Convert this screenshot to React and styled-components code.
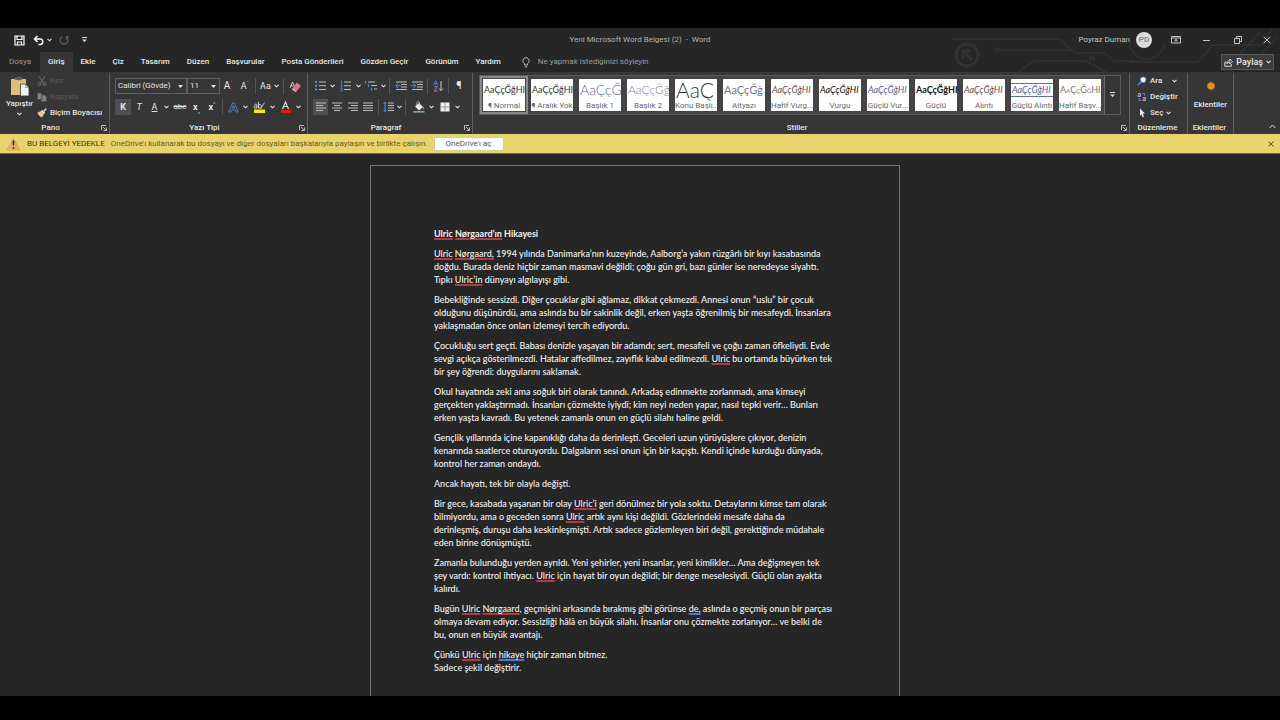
import { useState } from "react"

import styled, { createGlobalStyle } from "styled-components";
import { css } from "styled-components"


const GlobalStyle = createGlobalStyle`
    * { box-sizing:border-box; }
    body {
        margin:0;
        background-color:#000;
        font-family:Roboto, "Noto Sans", sans-serif;
        font-size:8px;
        line-height:12px;
        color:#e6e6e6;
    }
    button, input, select {
        font:inherit;
        color:inherit;
        background:none;
        border:none;
        padding:0;
        margin:0;
    }
    svg { display:block; flex:none; }
`
const Screen = styled.div`
    min-height:100vh;
    padding:28px 0 24px;
    display:flex;
    flex-direction:column;
`
const Window = styled.div`
    flex:1;
    display:flex;
    flex-direction:column;
    background-color:#262626;
`
const Header = styled.header`
    position:relative;
`
const Circuit = styled.svg`
    position:absolute;
    top:0;
    right:0;
`
const TitleBar = styled.div`
    position:relative;
    display:grid;
    grid-template-columns:1fr auto 1fr;
    align-items:center;
    height:24px;
`
const QuickAccess = styled.div`
    display:flex;
    align-items:center;
    padding-left:8px;
`
const DocTitle = styled.h1`
    margin:0;
    font-size:8px;
    font-weight:400;
    color:#b4b4b4;
    white-space:pre;
`
const WindowTools = styled.div`
    display:flex;
    justify-content:flex-end;
    align-items:center;
    color:#c4c4c4;
`
const Avatar = styled.span`
    width:16px;
    height:16px;
    margin:0 8px 0 6px;
    border-radius:50%;
    background-color:#dcdcdc;
    color:#666;
    line-height:16px;
    text-align:center;
`
const ToolButton = styled.button`
    display:flex;
    align-items:center;
    justify-content:center;
    flex:none;
    width:${p => p.$w || 16}px;
    height:16px;
    ${p => p.$active && css`background-color:#505050;`}
    ${p => p.$dim && css`color:#5c5c5c;`}
`
const TabRow = styled.nav`
    position:relative;
    display:flex;
    align-items:stretch;
    height:20px;
    padding-right:6px;
`
const Tab = styled.button`
    padding:0 9px 0 8px;
    font-weight:500;
    white-space:nowrap;
    ${p => p.$file && css`color:#9a9a9a; font-weight:400; padding:0 9px;`}
    ${p => p.$active && css`background-color:#363636; padding:0 8px;`}
`
const Search = styled.label`
    display:flex;
    flex:1;
    align-items:center;
    gap:8px;
    margin-left:12px;
    color:#b8b8b8;
`
const SearchInput = styled.input`
    width:160px;
    outline:none;
    &::placeholder { color:#9c9c9c; opacity:1; }
`
const ShareButton = styled.button`
    display:flex;
    align-items:center;
    gap:3px;
    align-self:center;
    height:16px;
    padding:0 2px;
    border:1px solid #5a5a5a;
    background-color:#3c3c3c;
    font-size:9px;
    font-weight:500;
`
const Ribbon = styled.div`
    display:flex;
    height:62px;
    padding-top:1px;
    background-color:#363636;
`
const Group = styled.section`
    display:flex;
    flex-direction:column;
    justify-content:space-between;
    flex:${p => p.$grow ? "1" : "none"};
    min-width:0;
    width:${p => p.$w ? `${p.$w}px` : "auto"};
    border-right:1px solid #5e5e5e;
`
const GroupBody = styled.div`
    display:flex;
    flex-direction:column;
    gap:5px;
    padding:5px 0 0 5px;
`
const GroupFooter = styled.div`
    display:flex;
    align-items:center;
    height:12px;
    padding-right:2px;
    font-weight:500;
`
const GroupName = styled.span`
    flex:1;
    text-align:center;
`
const Row = styled.div`
    display:flex;
    align-items:center;
    height:16px;
`
const Divider = styled.span`
    flex:none;
    width:1px;
    height:16px;
    margin:0 ${p => p.$m || 3}px 0 2px;
    background-color:#555;
`
const SelectBox = styled.label`
    display:flex;
    align-items:center;
    width:${p => p.$w}px;
    height:16px;
    padding:0 3px 0 2px;
    border:1px solid #5e5e5e;
`
const Select = styled.select`
    flex:1;
    min-width:0;
    appearance:none;
    outline:none;
`
const Glyph = styled.span`
    font-size:${p => p.$size || 10}px;
    font-weight:${p => p.$bold ? 700 : 400};
    font-style:${p => p.$italic ? "italic" : "normal"};
    text-decoration:${p => p.$line || "none"};
    sup, sub { font-size:6px; line-height:0; color:#6f9fd8; }
`
const Clipboard = styled.div`
    display:flex;
    padding-top:1px;
`
const PasteButton = styled.button`
    display:flex;
    flex-direction:column;
    align-items:center;
    width:37px;
    padding:2px 0 0 2px;
    font-weight:500;
    svg + span { margin:2px 0; }
`
const Stack = styled.div`
    display:flex;
    flex-direction:column;
    gap:4px;
    padding-top:1px;
`
const EditStack = styled(Stack)`
    padding:2px 0 0 7px;
`
const TextButton = styled.button`
    display:flex;
    align-items:center;
    gap:3px;
    height:12px;
    white-space:nowrap;
    font-weight:500;
    ${p => p.$dim && css`color:#585858; font-weight:400;`}
`
const SearchCaret = styled.span`
    padding-left:7px;
`
const Gallery = styled.div`
    display:flex;
    align-self:flex-start;
    max-width:calc(100% - 7px);
    height:40px;
    margin:2px 0 0 6px;
    border:1px solid #5a5a5a;
    background-color:#444;
    overflow:hidden;
`
const StyleCard = styled.button`
    display:flex;
    flex-direction:column;
    flex:none;
    align-items:center;
    justify-content:space-between;
    width:48px;
    height:38px;
    padding:1px;
    border:2px solid ${p => p.$active ? "#8a8a8a" : "#444"};
    background-color:#fff;
    background-clip:content-box;
    overflow:hidden;
`
const Sample = styled.span`
    width:42px;
    height:22px;
    padding-left:1px;
    overflow:hidden;
    white-space:nowrap;
    text-align:left;
    font-family:Lato, sans-serif;
    line-height:22px;
    color:${p => p.$color || "#333"};
    font-size:${p => p.$size || 9}px;
    font-weight:${p => p.$weight || 400};
    font-style:${p => p.$italic ? "italic" : "normal"};
    font-variant-caps:${p => p.$caps ? "small-caps" : "normal"};
    ${p => p.$lined && css`
        height:14px;
        margin-top:4px;
        line-height:12px;
        border-top:1px solid #5a6fae;
        border-bottom:1px solid #5a6fae;
    `}
`
const StyleName = styled.span`
    width:42px;
    line-height:10px;
    color:#666;
    white-space:nowrap;
    overflow:hidden;
`
const MoreButton = styled.button`
    display:flex;
    align-items:center;
    justify-content:center;
    width:16px;
    border-left:1px solid #6a6a6a;
    background-color:#363636;
`
const AddIns = styled.button`
    display:flex;
    flex-direction:column;
    align-items:center;
    gap:7px;
    padding-top:7px;
    font-weight:500;
`
const RibbonEnd = styled.div`
    display:flex;
    width:46px;
    align-items:flex-end;
    justify-content:flex-end;
    padding:0 3px 0 0;
`
const Notice = styled.div`
    display:flex;
    align-items:center;
    height:20px;
    padding:0 4px 0 6px;
    border-bottom:1px solid #7d6a2a;
    background-color:#e8d36c;
    color:#6a5a1c;
`
const NoticeTitle = styled.strong`
    margin:0 6px;
    font-weight:400;
    color:#3d330a;
`
const NoticeButton = styled.button`
    height:14px;
    margin:0 auto 0 6px;
    padding:0 11px;
    border:1px solid #d4cba0;
    background-color:#fff;
    color:#555;
`
const Desk = styled.main`
    flex:1;
    display:flex;
    justify-content:center;
    padding:11px 10px 0 0;
`
const Paper = styled.article`
    width:530px;
    padding:61px 59px 12px 63px;
    border:1px solid #757575;
    border-bottom:none;
    font-family:Lato, "Open Sans", sans-serif;
    font-size:9px;
    line-height:13px;
    color:#f4f4f4;
    white-space:nowrap;
`
const Heading = styled.h2`
    margin:0 0 7px;
    font-size:9px;
    font-weight:700;
`
const Paragraph = styled.p`
    margin:0 0 7px;
    font-weight:500;
`
const Spell = styled.span`
    text-decoration:underline solid #b03a46 2px;
    text-underline-offset:1px;
    text-decoration-skip-ink:none;
`
const Grammar = styled.span`
    text-decoration:underline solid #4f74d8 2px;
    text-underline-offset:1px;
    text-decoration-skip-ink:none;
`

const CaretIcon = () => (
    <svg width="5" height="4" viewBox="0 0 5 4" fill="none" stroke="currentColor" strokeWidth="1.1">
        <path d="M.5.8l2 2 2-2" />
    </svg>
)

const Caret = ({ w = 8 }) => (
    <ToolButton $w={w} aria-label="Seçenekler">
        <CaretIcon />
    </ToolButton>
)

const Triangle = () => (
    <svg width="5" height="3" viewBox="0 0 5 3" fill="currentColor"><path d="M0 0h5L2.500 3z" /></svg>
)

const Launcher = () => (
    <svg width="6" height="6" viewBox="0 0 6 6" fill="none" stroke="#ccc" strokeWidth=".9">
        <path d="M.5 5V.5H5M2 2l3 3M5.500 2.500v3h-3" />
    </svg>
)

// four text lines, each one given as [start, end]
const Lines = ({ rows, children }) => (
    <svg width="12" height="12" viewBox="0 0 12 12" fill="none" stroke="#bdbdbd">
        {rows.map(([a, b], i) => <path key={i} d={`M${a} ${2 + i * 2.5}H${b}`} />)}
        {children}
    </svg>
)

const ALIGNS = [
    ["Sola hizala", [[1, 11], [1, 8], [1, 11], [1, 8]]],
    ["Ortala", [[1, 11], [3, 9], [1, 11], [3, 9]]],
    ["Sağa hizala", [[1, 11], [4, 11], [1, 11], [4, 11]]],
    ["İki yana yasla", [[1, 11], [1, 11], [1, 11], [1, 11]]],
]
const ALIGN_WIDTHS = [15, 17, 15, 16]

const TABS = ["Giriş", "Ekle", "Çiz", "Tasarım", "Düzen", "Başvurular", "Posta Gönderileri", "Gözden Geçir", "Görünüm", "Yardım"]

const STYLES = [
    { name: "¶ Normal" },
    { name: "¶ Aralık Yok" },
    { name: "Başlık 1", sample: "AaÇçĞ", size: 14, color: "#5468a0", weight: 300 },
    { name: "Başlık 2", sample: "AaÇçĞğ", size: 12, color: "#7484ac", weight: 300 },
    { name: "Konu Başlı...", sample: "AaÇ", size: 21, weight: 300 },
    { name: "Altyazı", sample: "AaÇçĞğ", size: 11, color: "#777" },
    { name: "Hafif Vurg...", italic: true, color: "#555" },
    { name: "Vurgu", italic: true, color: "#111" },
    { name: "Güçlü Vur...", italic: true, color: "#4c5fa0" },
    { name: "Güçlü", weight: 700, color: "#111" },
    { name: "Alıntı", italic: true, color: "#555" },
    { name: "Güçlü Alıntı", italic: true, color: "#4c5fa0", lined: true },
    { name: "Hafif Başv...", caps: true, color: "#777" },
]

function TitleArea() {
    return (
        <TitleBar>
            <QuickAccess>
                <ToolButton $w={22} aria-label="Kaydet">
                    <svg width="11" height="11" viewBox="0 0 11 11" fill="none" stroke="#fff" strokeWidth="1.200">
                        <path d="M1 1h9v9H1zM3 1v3.500h5V1M3.500 10V7h4v3" />
                    </svg>
                </ToolButton>
                <ToolButton $w={17} aria-label="Geri al">
                    <svg width="11" height="11" viewBox="0 0 11 11" fill="none" stroke="#fff" strokeWidth="1.500">
                        <path d="M4.500 1L1.500 4l3 3M1.500 4H7a2.700 2.700 0 010 5.500H5.500" />
                    </svg>
                </ToolButton>
                <ToolButton $w={5} aria-label="Geri alma listesi"><CaretIcon /></ToolButton>
                <ToolButton $w={24} $dim aria-label="Yinele">
                    <svg width="10" height="10" viewBox="0 0 10 10" fill="none" stroke="currentColor" strokeWidth="1.200">
                        <path d="M3 1.700a4 4 0 104.500.3M7.500 5V1.700H10" />
                    </svg>
                </ToolButton>
                <ToolButton aria-label="Özelleştir">
                    <svg width="5" height="6" viewBox="0 0 5 6" fill="#ddd"><path d="M0 0h5v1H0zM0 2.500h5L2.500 5z" /></svg>
                </ToolButton>
            </QuickAccess>
            <DocTitle>Yeni Microsoft Word Belgesi (2)  -  Word</DocTitle>
            <WindowTools>
                <span>Poyraz Duman</span>
                <Avatar>PD</Avatar>
                <ToolButton $w={31} aria-label="Şerit seçenekleri">
                    <svg width="10" height="8" viewBox="0 0 10 8" fill="none" stroke="currentColor">
                        <path d="M.5.5h9v6.500h-9zM.5 2h9M5 6.500V3.500M3.500 4.700L5 3.300l1.500 1.400" />
                    </svg>
                </ToolButton>
                <ToolButton $w={31} aria-label="Simge durumuna küçült">
                    <svg width="7" height="7" viewBox="0 0 7 7" stroke="currentColor"><path d="M0 3.500h7" /></svg>
                </ToolButton>
                <ToolButton $w={31} aria-label="Geri yükle">
                    <svg width="8" height="8" viewBox="0 0 8 8" fill="none" stroke="currentColor">
                        <path d="M.5 2.500h5v5h-5zM2.500 2.500V.5h5v5h-2" />
                    </svg>
                </ToolButton>
                <ToolButton $w={27} aria-label="Kapat">
                    <svg width="8" height="8" viewBox="0 0 8 8" stroke="currentColor"><path d="M.7.7l6.600 6.600M7.300.7L.7 7.300" /></svg>
                </ToolButton>
            </WindowTools>
        </TitleBar>
    )
}

function Tabs() {
    const [tab, setTab] = useState("Giriş")

    return (
        <TabRow>
            <Tab $file>Dosya</Tab>
            {TABS.map(name => (
                <Tab key={name} $active={name === tab} onClick={() => setTab(name)}>{name}</Tab>
            ))}
            <Search>
                <svg width="8" height="11" viewBox="0 0 8 11" fill="none" stroke="currentColor" strokeWidth="1">
                    <path d="M2.500 8V6.700A3.200 3.200 0 014 .7a3.200 3.200 0 011.500 6V8zM2.700 9.800h2.600" />
                </svg>
                <SearchInput type="text" name="search" aria-label="Arama" placeholder="Ne yapmak istediğinizi söyleyin" />
            </Search>
            <ShareButton>
                <svg width="9" height="9" viewBox="0 0 9 9" fill="none" stroke="currentColor" strokeWidth=".9">
                    <path d="M2.500 4H.8v4.300h6.500V6M2.800 6c0-2 1-3.200 3-3.200V1l2.500 2.500L5.800 6V4.400C4.300 4.400 3.500 5 2.800 6z" />
                </svg>
                Paylaş
                <CaretIcon />
            </ShareButton>
        </TabRow>
    )
}

function ClipboardGroup() {
    return (
        <Group $w={110}>
            <Clipboard>
                <PasteButton>
                    <svg width="20" height="20" viewBox="0 0 20 20">
                        <path d="M1 3h15v16H1z" fill="#e2bf72" />
                        <path d="M5 4V2h2a1.700 1.700 0 013 0h2v2z" fill="#555" stroke="#888" strokeWidth=".6" />
                        <path d="M10.500 8h5l3.500 3.500V20h-8.500z" fill="#f2f2f2" stroke="#363636" strokeWidth=".8" />
                        <path d="M15.500 8v3.500H19" fill="none" stroke="#777" strokeWidth=".7" />
                    </svg>
                    <span>Yapıştır</span>
                    <CaretIcon />
                </PasteButton>
                <Stack>
                    <TextButton $dim disabled>
                        <svg width="10" height="10" viewBox="0 0 10 10" fill="none" stroke="#666" strokeWidth="1.100">
                            <path d="M2 .5l4.500 6M8 .5l-4.500 6" /><circle cx="2.500" cy="8" r="1.500" /><circle cx="7.500" cy="8" r="1.500" />
                        </svg>
                        Kes
                    </TextButton>
                    <TextButton $dim disabled>
                        <svg width="10" height="10" viewBox="0 0 10 10" fill="#858585" stroke="#4a4a4a" strokeWidth=".6">
                            <path d="M.5 1h3l2 2v4.500h-5zM4 3h3.500l2 2v4.500H4z" />
                        </svg>
                        Kopyala
                    </TextButton>
                    <TextButton>
                        <svg width="10" height="10" viewBox="0 0 10 10">
                            <path d="M.5 4.500L4 3l3 3-2 3.500C3 9 1 7 .5 4.500z" fill="#e8c77c" />
                            <path d="M4 3l1.200-1L8 4.800 7 6z" fill="#fff" />
                            <path d="M6.500 3.500L9.300.7" stroke="#d8d8d8" strokeWidth="1.600" />
                        </svg>
                        Biçim Boyacısı
                    </TextButton>
                </Stack>
            </Clipboard>
            <GroupFooter><GroupName>Pano</GroupName><Launcher /></GroupFooter>
        </Group>
    )
}

function FontGroup() {
    const [bold, setBold] = useState(true)

    return (
        <Group $w={198}>
            <GroupBody>
                <Row>
                    <SelectBox $w={72}>
                        <Select name="font" aria-label="Yazı tipi"><option>Calibri (Gövde)</option></Select>
                        <Triangle />
                    </SelectBox>
                    <SelectBox $w={33}>
                        <Select name="size" aria-label="Yazı tipi boyutu"><option>11</option></Select>
                        <Triangle />
                    </SelectBox>
                    <ToolButton $w={17}><Glyph>A<sup>ˆ</sup></Glyph></ToolButton>
                    <ToolButton><Glyph $size={9}>A<sup>ˇ</sup></Glyph></ToolButton>
                    <Divider />
                    <ToolButton $w={13}><Glyph $size={9}>Aa</Glyph></ToolButton>
                    <Caret w={9} />
                    <Divider />
                    <ToolButton aria-label="Biçimlendirmeyi temizle">
                        <svg width="12" height="11" viewBox="0 0 12 11">
                            <path d="M1 7L3.500 1 5.500 5M2 4.800h2.500" fill="none" stroke="#ccc" />
                            <path d="M3.500 7L8 1.500 12 5 7.500 10.500z" fill="#e0708a" /><path d="M3.500 7l4 3.500-1 .5L3 8.500z" fill="#f2c0cb" />
                        </svg>
                    </ToolButton>
                </Row>
                <Row>
                    <ToolButton $active={bold} onClick={() => setBold(!bold)}><Glyph $size={9} $bold>K</Glyph></ToolButton>
                    <ToolButton><Glyph $size={9} $italic>T</Glyph></ToolButton>
                    <ToolButton $w={15}><Glyph $size={9} $line="underline">A</Glyph></ToolButton>
                    <Caret w={9} />
                    <ToolButton $w={18}><Glyph $size={8} $line="line-through">abc</Glyph></ToolButton>
                    <ToolButton $w={15}><Glyph $size={9} $bold>x<sub>₂</sub></Glyph></ToolButton>
                    <ToolButton><Glyph $size={9} $bold>x<sup>²</sup></Glyph></ToolButton>
                    <Divider />
                    <ToolButton $w={15} aria-label="Metin efektleri">
                        <svg width="11" height="11" viewBox="0 0 11 11" fill="none" stroke="#3f7fca" strokeWidth="1">
                            <path d="M.8 10L4.500 1h2l3.700 9H8L7.200 7.800H3.800L3 10zM4.500 6h2L5.500 3.300z" />
                        </svg>
                    </ToolButton>
                    <Caret />
                    <ToolButton $w={19} aria-label="Vurgu rengi">
                        <svg width="12" height="12" viewBox="0 0 12 12">
                            <path d="M1 8.500h11V12H1z" fill="#f5f000" />
                            <path d="M1.500 3.500c2-1 2.500 0 2.500 1v2.500c-2 .5-3-.2-3-1s1-1.300 3-1M5.500.8V7c2 .5 2.800-.7 2.800-2s-1.300-2-2.800-1M7.500 8l4-6.500" fill="none" stroke="#ddd" strokeWidth=".9" />
                        </svg>
                    </ToolButton>
                    <Caret />
                    <ToolButton $w={18} aria-label="Yazı tipi rengi">
                        <svg width="11" height="12" viewBox="0 0 11 12">
                            <path d="M1 9h10v3H1z" fill="#e81313" />
                            <path d="M2.500 8L5.500 1l3 7M3.700 5.500h3.600" fill="none" stroke="#e6e6e6" strokeWidth="1.100" />
                        </svg>
                    </ToolButton>
                    <Caret />
                </Row>
            </GroupBody>
            <GroupFooter><GroupName>Yazı Tipi</GroupName><Launcher /></GroupFooter>
        </Group>
    )
}

function ParagraphGroup() {
    const [align, setAlign] = useState("Sola hizala")

    return (
        <Group $w={165}>
            <GroupBody>
                <Row>
                    <ToolButton $w={15} aria-label="Madde işaretleri">
                        <svg width="12" height="12" viewBox="0 0 12 12" fill="none" stroke="#bdbdbd">
                            <path d="M4 2h7M4 5.700h7M4 9.500h7" />
                            <path d="M0 2h2M0 5.700h2M0 9.500h2" stroke="#4a90e0" strokeWidth="2" />
                        </svg>
                    </ToolButton>
                    <Caret w={9} />
                    <ToolButton $w={17} aria-label="Numaralandırma">
                        <svg width="12" height="12" viewBox="0 0 12 12" fill="none" stroke="#bdbdbd">
                            <path d="M4 2h7M4 5.700h7M4 9.500h7" />
                            <path d="M.5 1h1v3M.5 5h1.500v2H.5M.5 8.500H2V11H.5" stroke="#4a90e0" strokeWidth=".9" />
                        </svg>
                    </ToolButton>
                    <Caret />
                    <ToolButton $w={18} aria-label="Çok düzeyli liste">
                        <svg width="12" height="12" viewBox="0 0 12 12" fill="none" stroke="#bdbdbd">
                            <path d="M3 2h7M6 5.500h6M9 9h3" />
                            <path d="M.5 1v2.500M3.500 4.500V7M6.500 8v2.500" stroke="#4a90e0" strokeWidth="1.200" />
                        </svg>
                    </ToolButton>
                    <Caret w={7} />
                    <Divider />
                    <ToolButton aria-label="Girintiyi azalt">
                        <Lines rows={[[1, 12], [6, 12], [6, 12], [1, 12]]}><path d="M5.500 5.700H1M3 3.500L.8 5.700 3 8" stroke="#4a90e0" /></Lines>
                    </ToolButton>
                    <ToolButton aria-label="Girintiyi artır">
                        <Lines rows={[[1, 12], [6, 12], [6, 12], [1, 12]]}><path d="M0 5.700h4.500M2.500 3.500l2.200 2.200L2.500 8" stroke="#4a90e0" /></Lines>
                    </ToolButton>
                    <Divider />
                    <ToolButton $w={15} aria-label="Sırala">
                        <svg width="11" height="12" viewBox="0 0 11 12" fill="none" strokeWidth=".9">
                            <path d="M.7 5L2.700.7 4.700 5M1.500 3.700h2.500" stroke="#4a90e0" />
                            <path d="M1 6.700h3.500L1 11h3.800" stroke="#a67cc8" />
                            <path d="M8 1v9.500M6 8.500l2 2 2-2" stroke="#ddd" />
                        </svg>
                    </ToolButton>
                    <Divider />
                    <ToolButton $w={14}><Glyph $size={11}>¶</Glyph></ToolButton>
                </Row>
                <Row>
                    {ALIGNS.map(([name, rows], i) => (
                        <ToolButton
                            key={name}
                            $w={ALIGN_WIDTHS[i]}
                            $active={name === align}
                            aria-label={name}
                            onClick={() => setAlign(name)}
                        >
                            <Lines rows={rows} />
                        </ToolButton>
                    ))}
                    <Divider />
                    <ToolButton $w={14} aria-label="Satır aralığı">
                        <Lines rows={[[5, 11], [5, 11], [5, 11], [5, 11]]}>
                            <path d="M2 1.500v9M.5 3L2 1.300 3.500 3M.5 9L2 10.700 3.500 9" stroke="#4a90e0" />
                        </Lines>
                    </ToolButton>
                    <Caret w={7} />
                    <Divider $m={5} />
                    <ToolButton aria-label="Gölgelendirme">
                        <svg width="12" height="12" viewBox="0 0 12 12">
                            <path d="M2 5.500L6 2l4 4-4 3.500z" fill="#eee" />
                            <path d="M4 4V1.500a1.300 1.300 0 012.500 0V5" fill="none" stroke="#c9c9c9" strokeWidth=".8" />
                            <path d="M10 5c1.500 1.500 1.500 3 .7 3.500S9 7.500 10 5z" fill="#4a90e0" />
                            <path d="M.5 10h11v1.700H.5z" fill="#7aa58a" />
                        </svg>
                    </ToolButton>
                    <Caret />
                    <ToolButton $w={19} aria-label="Kenarlıklar">
                        <svg width="10" height="10" viewBox="0 0 10 10">
                            <path d="M.5.5h9v9h-9z" fill="#eee" /><path d="M5 1v8M1 5h8" stroke="#888" strokeWidth=".8" />
                        </svg>
                    </ToolButton>
                    <Caret w={7} />
                </Row>
            </GroupBody>
            <GroupFooter><GroupName>Paragraf</GroupName><Launcher /></GroupFooter>
        </Group>
    )
}

function StylesGroup() {
    const [current, setCurrent] = useState("¶ Normal")

    return (
        <Group $grow>
            <Gallery>
                {STYLES.map(s => (
                    <StyleCard key={s.name} $active={s.name === current} onClick={() => setCurrent(s.name)}>
                        <Sample
                            $size={s.size}
                            $color={s.color}
                            $weight={s.weight}
                            $italic={s.italic}
                            $caps={s.caps}
                            $lined={s.lined}
                        >
                            {s.sample || "AaÇçĞğHI"}
                        </Sample>
                        <StyleName>{s.name}</StyleName>
                    </StyleCard>
                ))}
                <MoreButton aria-label="Diğer stiller">
                    <svg width="5" height="6" viewBox="0 0 5 6" fill="#ddd"><path d="M0 0h5v1H0zM0 2.500h5L2.500 5z" /></svg>
                </MoreButton>
            </Gallery>
            <GroupFooter><GroupName>Stiller</GroupName><Launcher /></GroupFooter>
        </Group>
    )
}

function EditingGroup() {
    return (
        <Group $w={58}>
            <EditStack>
                <TextButton>
                    <svg width="10" height="10" viewBox="0 0 10 10">
                        <path d="M.8 9.200L4 6" stroke="#3f7fca" strokeWidth="1.800" />
                        <circle cx="6.200" cy="3.700" r="2.800" fill="#fff" stroke="#4a90e0" />
                    </svg>
                    Ara
                    <SearchCaret><CaretIcon /></SearchCaret>
                </TextButton>
                <TextButton>
                    <svg width="10" height="10" viewBox="0 0 10 10" fill="none">
                        <path d="M1 1.500h2.500v3H1v-1.500h2.500" stroke="#c58ad8" />
                        <path d="M6 5.500h2.500v3H6V7h2.500" stroke="#c58ad8" />
                        <path d="M2 6v2.500h2.500M5.500 1.500h2v2" stroke="#4a90e0" />
                    </svg>
                    Değiştir
                </TextButton>
                <TextButton>
                    <svg width="10" height="10" viewBox="0 0 10 10" fill="#f2f2f2">
                        <path d="M3 .5l5 5H5.700L7 8.700l-1.300.6L4.500 6.200 3 7.700z" />
                    </svg>
                    Seç
                    <CaretIcon />
                </TextButton>
            </EditStack>
            <GroupFooter><GroupName>Düzenleme</GroupName></GroupFooter>
        </Group>
    )
}

function Story() {
    return (
        <Paper>
            <Heading><Spell>Ulric</Spell> <Spell>Nørgaard’ın</Spell> Hikayesi</Heading>
            <Paragraph>
                <Spell>Ulric</Spell> <Spell>Nørgaard,</Spell> 1994 yılında Danimarka’nın kuzeyinde, Aalborg’a yakın rüzgârlı bir kıyı kasabasında<br />
                doğdu. Burada deniz hiçbir zaman masmavi değildi; çoğu gün gri, bazı günler ise neredeyse siyahtı.<br />
                Tıpkı <Spell>Ulric’in</Spell> dünyayı algılayışı gibi.
            </Paragraph>
            <Paragraph>
                Bebekliğinde sessizdi. Diğer çocuklar gibi ağlamaz, dikkat çekmezdi. Annesi onun “uslu” bir çocuk<br />
                olduğunu düşünürdü, ama aslında bu bir sakinlik değil, erken yaşta öğrenilmiş bir mesafeydi. İnsanlara<br />
                yaklaşmadan önce onları izlemeyi tercih ediyordu.
            </Paragraph>
            <Paragraph>
                Çocukluğu sert geçti. Babası denizle yaşayan bir adamdı; sert, mesafeli ve çoğu zaman öfkeliydi. Evde<br />
                sevgi açıkça gösterilmezdi. Hatalar affedilmez, zayıflık kabul edilmezdi. <Spell>Ulric</Spell> bu ortamda büyürken tek<br />
                bir şey öğrendi: duygularını saklamak.
            </Paragraph>
            <Paragraph>
                Okul hayatında zeki ama soğuk biri olarak tanındı. Arkadaş edinmekte zorlanmadı, ama kimseyi<br />
                gerçekten yaklaştırmadı. İnsanları çözmekte iyiydi; kim neyi neden yapar, nasıl tepki verir… Bunları<br />
                erken yaşta kavradı. Bu yetenek zamanla onun en güçlü silahı haline geldi.
            </Paragraph>
            <Paragraph>
                Gençlik yıllarında içine kapanıklığı daha da derinleşti. Geceleri uzun yürüyüşlere çıkıyor, denizin<br />
                kenarında saatlerce oturuyordu. Dalgaların sesi onun için bir kaçıştı. Kendi içinde kurduğu dünyada,<br />
                kontrol her zaman ondaydı.
            </Paragraph>
            <Paragraph>Ancak hayatı, tek bir olayla değişti.</Paragraph>
            <Paragraph>
                Bir gece, kasabada yaşanan bir olay <Spell>Ulric’i</Spell> geri dönülmez bir yola soktu. Detaylarını kimse tam olarak<br />
                bilmiyordu, ama o geceden sonra <Spell>Ulric</Spell> artık aynı kişi değildi. Gözlerindeki mesafe daha da<br />
                derinleşmiş, duruşu daha keskinleşmişti. Artık sadece gözlemleyen biri değil, gerektiğinde müdahale<br />
                eden birine dönüşmüştü.
            </Paragraph>
            <Paragraph>
                Zamanla bulunduğu yerden ayrıldı. Yeni şehirler, yeni insanlar, yeni kimlikler… Ama değişmeyen tek<br />
                şey vardı: kontrol ihtiyacı. <Spell>Ulric</Spell> için hayat bir oyun değildi; bir denge meselesiydi. Güçlü olan ayakta<br />
                kalırdı.
            </Paragraph>
            <Paragraph>
                Bugün <Spell>Ulric</Spell> <Spell>Nørgaard</Spell>, geçmişini arkasında bırakmış gibi görünse <Grammar>de,</Grammar> aslında o geçmiş onun bir parçası<br />
                olmaya devam ediyor. Sessizliği hâlâ en büyük silahı. İnsanlar onu çözmekte zorlanıyor… ve belki de<br />
                bu, onun en büyük avantajı.
            </Paragraph>
            <Paragraph>
                Çünkü <Spell>Ulric</Spell> için <Grammar>hikaye</Grammar> hiçbir zaman bitmez.<br />
                Sadece şekil değiştirir.
            </Paragraph>
        </Paper>
    )
}

function App() {
    const [notice, setNotice] = useState(true)

    return (
        <Screen>
            <GlobalStyle />
            <Window lang="tr">
                <Header>
                    <Circuit width="340" height="44" viewBox="0 0 340 44" fill="none" stroke="#323232" strokeWidth="1.500">
                        <circle cx="27" cy="27" r="11" strokeWidth="3" />
                        <path d="M32 32l-8-8M23 31v-8h8" strokeWidth="2.500" />
                        <path d="M12 11h108l15 14h30l9 8h20M57 22h76M78 44l16-11h52l20 11M180 14h10a17 17 0 0034 0M190 34h68l14-17h50l10-17M306 44l30-34M298 28l22-24" />
                        <circle cx="57" cy="22" r="2" /><circle cx="152" cy="30" r="2" />
                    </Circuit>
                    <TitleArea />
                    <Tabs />
                </Header>
                <Ribbon>
                    <ClipboardGroup />
                    <FontGroup />
                    <ParagraphGroup />
                    <StylesGroup />
                    <EditingGroup />
                    <Group $w={46}>
                        <AddIns>
                            <svg width="10" height="12" viewBox="0 0 10 12">
                                <path d="M5 2l3.500 2v4L5 10 1.500 8V4z" fill="#e8921c" stroke="#b8690a" strokeWidth=".8" />
                            </svg>
                            Eklentiler
                        </AddIns>
                        <GroupFooter><GroupName>Eklentiler</GroupName></GroupFooter>
                    </Group>
                    <RibbonEnd>
                        <ToolButton $w={10} aria-label="Şeridi daralt">
                            <svg width="7" height="5" viewBox="0 0 7 5" fill="none" stroke="#ddd"><path d="M.7 4l2.800-3 2.800 3" /></svg>
                        </ToolButton>
                    </RibbonEnd>
                </Ribbon>
                {notice && (
                    <Notice role="status">
                        <svg width="15" height="14" viewBox="0 0 15 14">
                            <path d="M7.500 1L14 13H1z" fill="#e0b468" stroke="#d9ab5c" strokeLinejoin="round" />
                            <path d="M7.500 3.500v5M7.500 10v1.700" stroke="#2b2412" strokeWidth="1.500" />
                        </svg>
                        <NoticeTitle>BU BELGEYİ YEDEKLE</NoticeTitle>
                        <span>OneDrive'ı kullanarak bu dosyayı ve diğer dosyaları başkalarıyla paylaşın ve birlikte çalışın.</span>
                        <NoticeButton>OneDrive'ı aç</NoticeButton>
                        <ToolButton $w={10} aria-label="Kapat" onClick={() => setNotice(false)}>
                            <svg width="6" height="6" viewBox="0 0 6 6" stroke="#5f5118"><path d="M.5.5l5 5M5.500.5l-5 5" /></svg>
                        </ToolButton>
                    </Notice>
                )}
                <Desk>
                    <Story />
                </Desk>
            </Window>
        </Screen>
    )
}


export default App
